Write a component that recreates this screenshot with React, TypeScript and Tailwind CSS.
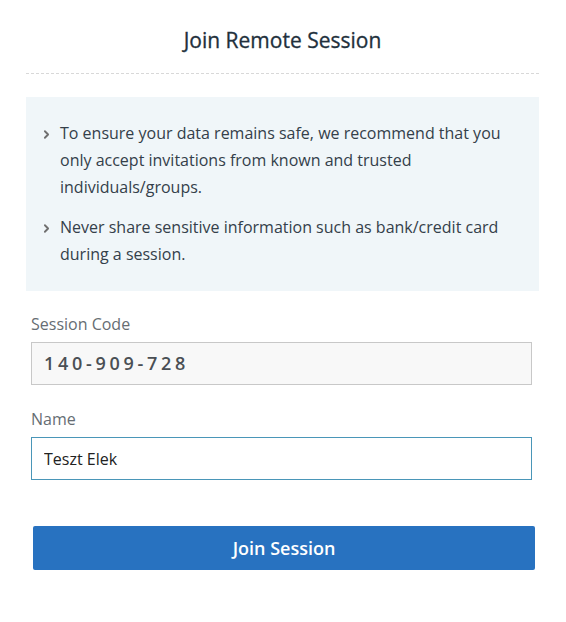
import { ChevronRight } from "lucide-react";

const tips = [
  "To ensure your data remains safe, we recommend that you only accept invitations from known and trusted individuals/groups.",
  "Never share sensitive information such as bank/credit card during a session.",
];

export default function App() {
  return (
    <div className="min-h-screen w-full bg-white font-['Open_Sans',sans-serif] text-[#333c44]">
      <div className="flex flex-col pt-[26px] pr-[27px] pl-[26px]">
        <h1 className="text-center text-[21px] leading-[28px] font-normal text-[#22303c] [-webkit-text-stroke:0.3px_#22303c]">
          Join Remote Session
        </h1>
        <div className="mt-[19px] border-t border-dashed border-[#d8d8d8]" />

        <ul className="mt-[23px] flex flex-col gap-[13px] bg-[#f0f6f9] pt-[23px] pr-[24px] pb-[23px] pl-[14px] text-[16px] leading-[27px]">
          {tips.map((tip) => (
            <li key={tip} className="flex gap-[7px]">
              <ChevronRight
                className="mt-[8px] h-[13px] w-[13px] shrink-0 text-[#6f6f6f]"
                strokeWidth={3.4}
              />
              <span className="text-[#34404a]">{tip}</span>
            </li>
          ))}
        </ul>

        <div className="flex flex-col pr-[7px] pl-[5px]">
          <label className="mt-[21px] text-[16px] leading-[24px] text-[#666d73]">
            Session Code
          </label>
          <div className="mt-[6px] flex h-[43px] items-center border border-[#c8c8c8] bg-[#f8f8f8] px-[12px] text-[18px] font-semibold tracking-[3.7px] text-[#4a4f54]">
            140-909-728
          </div>

          <label className="mt-[22px] text-[16px] leading-[24px] text-[#666d73]">
            Name
          </label>
          <div className="mt-[6px] flex h-[43px] items-center border border-[#4a96b8] bg-white px-[12px]">
            <input
              className="w-full border-0 bg-transparent p-0 text-[16px] text-[#222] outline-none"
              defaultValue="Teszt Elek"
            />
          </div>
        </div>

        <button className="mt-[46px] mr-[4px] ml-[7px] h-[44px] rounded-[2px] bg-[#2872c0] text-[18px] font-semibold text-white">
          Join Session
        </button>
      </div>
    </div>
  );
}
